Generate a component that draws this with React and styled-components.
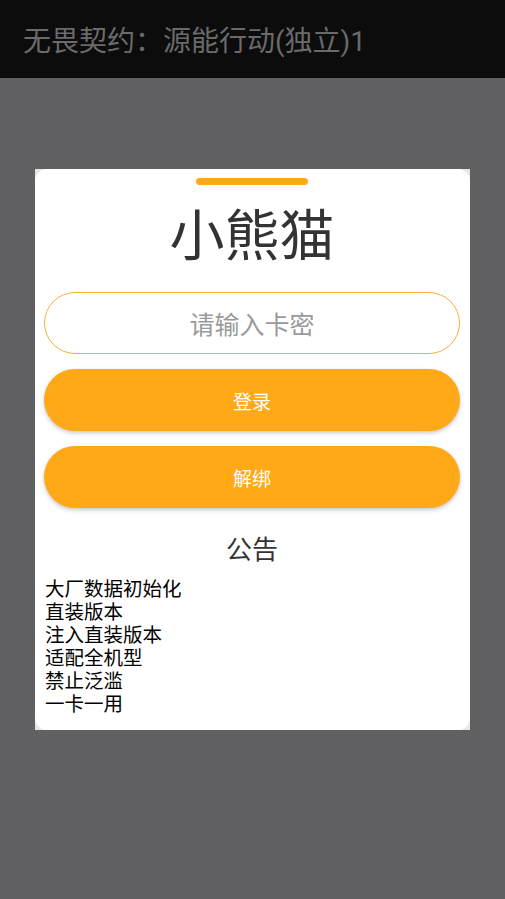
import styled, { createGlobalStyle } from 'styled-components'
import React from "react";

const Global = createGlobalStyle`
    html, body {
        margin: 0;
        padding: 0;
        background: #616163;
        font-family: "Noto Sans CJK SC", "Noto Sans", sans-serif;
    }
`

const Page = styled.div`
    min-height: 100vh;
    display: flex;
    flex-direction: column;
`

const TopBar = styled.header`
    height: 78px;
    background: #0c0c0c;
    display: flex;
    align-items: center;
    padding-left: 23px;
    color: #6a6a6a;
    font-size: 28px;
    font-family: Roboto, "Noto Sans CJK SC", sans-serif;
`

const Body = styled.main`
    flex: 1;
    padding: 91px 35px 0 35px;
`

const Dialog = styled.div`
    background: #e6e6e7;
`

const Panel = styled.div`
    background: #fff;
    border-radius: 12px;
    padding: 9px 10px 16px 9px;
    display: flex;
    flex-direction: column;
`

const Handle = styled.div`
    align-self: center;
    width: 112px;
    height: 7px;
    border-radius: 4px;
    background: #ffa918;
`

const Title = styled.h1`
    margin: 11px 0 26px;
    text-align: center;
    font-size: 55px;
    font-weight: 400;
    line-height: 70px;
    color: #333;
`

const CardInput = styled.input`
    box-sizing: border-box;
    width: 100%;
    height: 62px;
    padding-bottom: 2px;
    border: 1px solid #f5b03a;
    border-radius: 31px;
    background: #fff;
    text-align: center;
    font-family: inherit;
    font-size: 25px;
    color: #333;
    outline: none;
    &::placeholder {
        color: #9a9a9a;
    }
`

const Button = styled.button`
    height: 62px;
    margin-top: ${p => p.$gap}px;
    padding-bottom: 1px;
    border: none;
    border-radius: 31px;
    background: #ffa918;
    color: #fff;
    font-family: inherit;
    font-size: 19px;
    box-shadow: 0 2px 4px rgba(0, 0, 0, 0.22);
`

const NoticeTitle = styled.h2`
    margin: 22px 0 10px;
    text-align: center;
    font-size: 26px;
    font-weight: 400;
    line-height: 36px;
    color: #333;
`

const NoticeText = styled.p`
    margin: 0;
    padding-left: 1px;
    font-size: 19.5px;
    line-height: 23px;
    color: #000;
    white-space: pre-line;
`

const notice = `大厂数据初始化
直装版本
注入直装版本
适配全机型
禁止泛滥
一卡一用`

const App = () => {
    return (
        <>
        <Global />
        <Page>
            <TopBar>无畏契约：源能行动(独立)1</TopBar>
            <Body>
                <Dialog>
                    <Panel>
                        <Handle />
                        <Title>小熊猫</Title>
                        <CardInput placeholder="请输入卡密" />
                        <Button $gap={15}>登录</Button>
                        <Button $gap={15}>解绑</Button>
                        <NoticeTitle>公告</NoticeTitle>
                        <NoticeText>{notice}</NoticeText>
                    </Panel>
                </Dialog>
            </Body>
        </Page>
        </>
    )
}

export default App;
